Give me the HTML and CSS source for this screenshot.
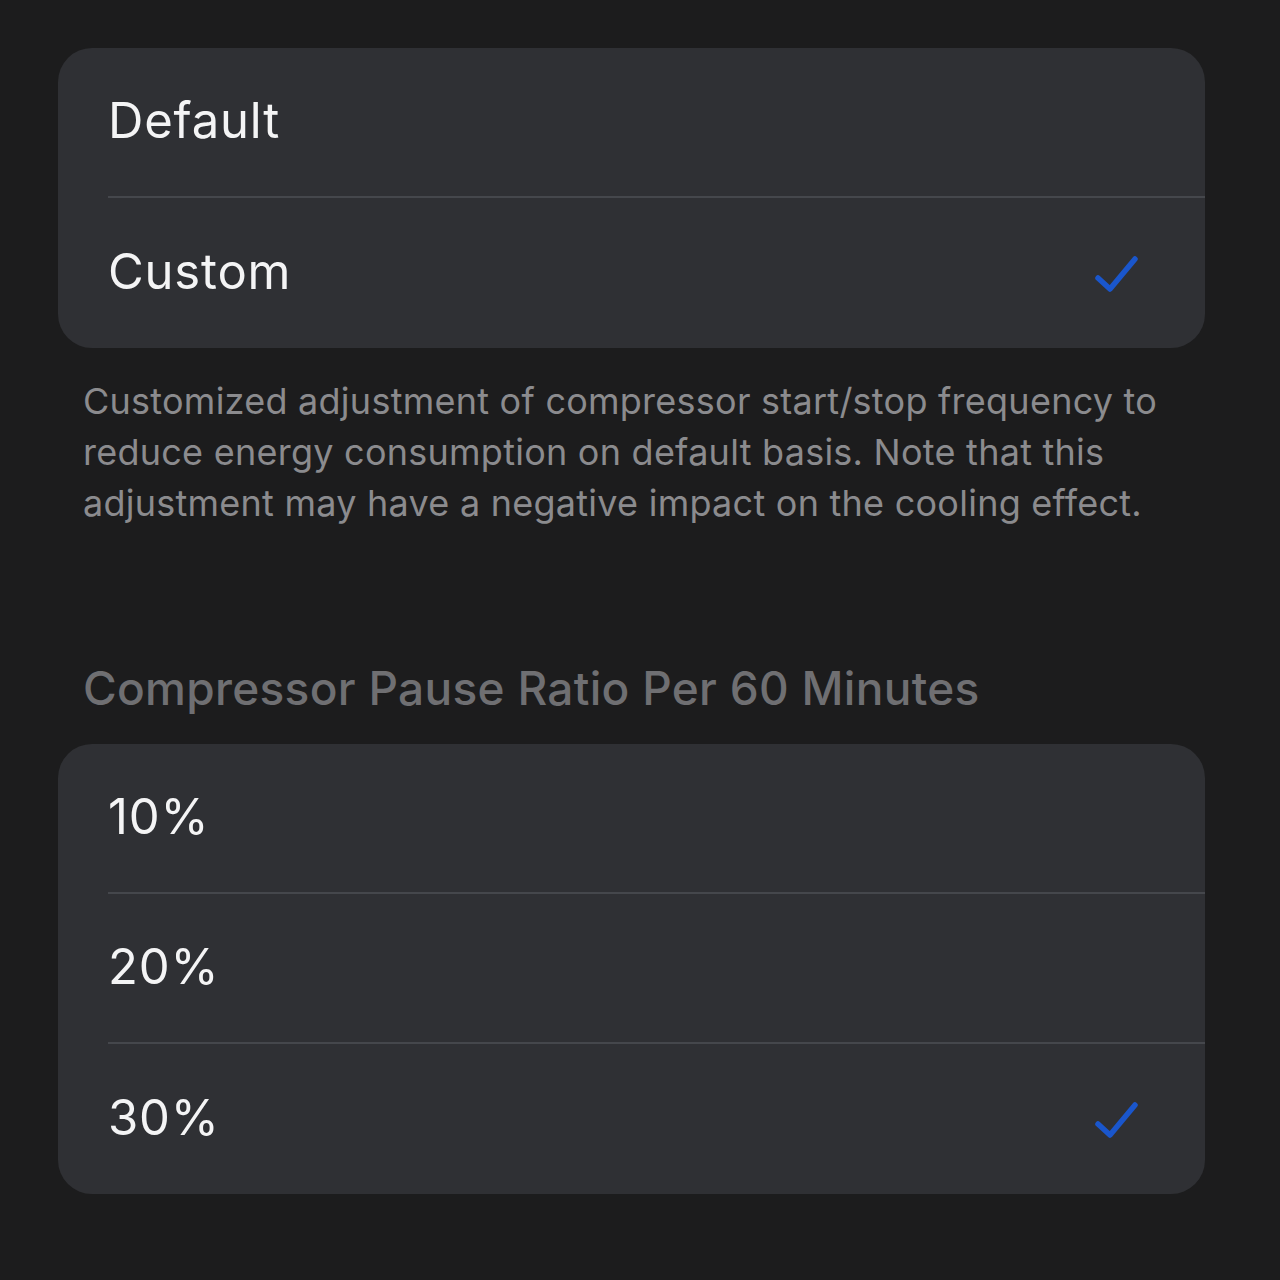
FILE: index.html
```html
<html lang="en">
<head>
    <meta charset="UTF-8">
    <meta name="viewport" content="width=device-width, initial-scale=1.0">
    <title>Compressor</title>
    <link rel="stylesheet" href="styles.css">
</head>
<body>

    <div class="page">
        <div class="group">
            <div class="row">
                <span class="label">Default</span>
            </div>
            <div class="row">
                <span class="label">Custom</span>
                <svg class="check" viewBox="0 0 48 40" width="48" height="40">
                    <path d="M5 25 L17 36 L42 6" fill="none" stroke="#1a56cc" stroke-width="5.5" stroke-linecap="round" stroke-linejoin="round"/>
                </svg>
            </div>
        </div>

        <p class="note">Customized adjustment of compressor start/stop frequency to reduce energy consumption on default basis. Note that this adjustment may have a negative impact on the cooling effect.</p>

        <h2 class="section">Compressor Pause Ratio Per 60 Minutes</h2>

        <div class="group">
            <div class="row">
                <span class="label">10%</span>
            </div>
            <div class="row">
                <span class="label">20%</span>
            </div>
            <div class="row">
                <span class="label">30%</span>
                <svg class="check" viewBox="0 0 48 40" width="48" height="40">
                    <path d="M5 25 L17 36 L42 6" fill="none" stroke="#1a56cc" stroke-width="5.5" stroke-linecap="round" stroke-linejoin="round"/>
                </svg>
            </div>
        </div>
    </div>

</body>
</html>
```

FILE: styles.css
```css
body {
    margin: 0;
    background-color: #1c1c1d;
    font-family: Inter, "Noto Sans", sans-serif;
    color: #f4f4f5;
}

.page {
    width: 1147px;
    margin-left: 58px;
    padding-top: 48px;
}

.group {
    background-color: #2f3034;
    border-radius: 34px;
    overflow: hidden;
}

.row {
    height: 150px;
    display: flex;
    align-items: center;
    justify-content: space-between;
    margin-left: 50px;
    padding-right: 64px;
    border-top: 2px solid #45474c;
    box-sizing: border-box;
}

.row:first-child {
    border-top: none;
    height: 148px;
}

.row:last-child {
    height: 152px;
}

.label {
    font-size: 49px;
    letter-spacing: 0.8px;
    margin-top: -3px;
}

.check {
    display: block;
}

.note {
    margin: 28px 0 0 25px;
    font-size: 36px;
    line-height: 51px;
    color: #8b8b8e;
    letter-spacing: 0.25px;
}

.section {
    margin: 129px 0 26px 25px;
    font-size: 46px;
    font-weight: 500;
    color: #6f6f72;
    line-height: 60px;
    letter-spacing: 0.3px;
}
```
